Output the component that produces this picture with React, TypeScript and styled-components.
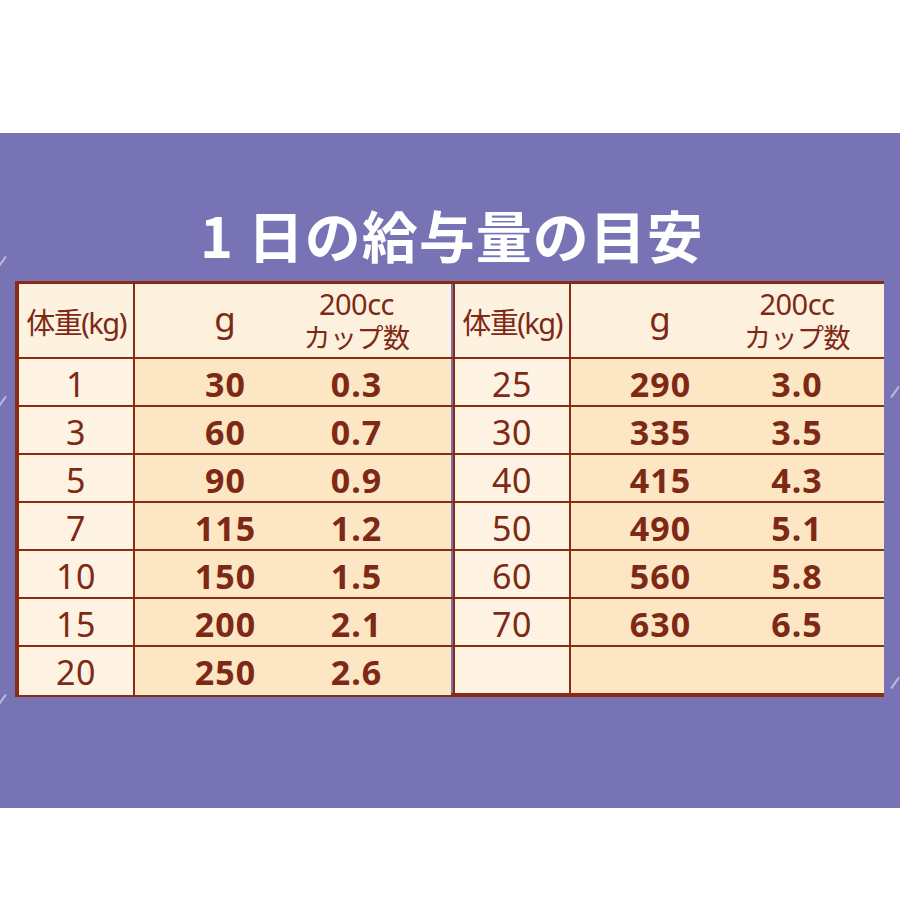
import React from "react";
import styled, { createGlobalStyle } from "styled-components";

const Global = createGlobalStyle`
  html, body { margin: 0; padding: 0; background: #ffffff; }
  body { font-family: "Noto Sans", "Noto Sans CJK JP", sans-serif; }
`;

const INK = "#7d2915";
const LINE = "#8a2c13";

const Page = styled.div`
  width: 900px;
  height: 900px;
  background: #ffffff;
  padding-top: 133px;
  box-sizing: border-box;
`;

const Panel = styled.section`
  position: relative;
  height: 675px;
  background: #7773b5;
  padding-top: 73px;
  box-sizing: border-box;
  overflow: hidden;
`;

const Title = styled.h1`
  margin: 0 0 19px;
  height: 56px;
  line-height: 56px;
  text-align: center;
  color: #ffffff;
  font-family: "Noto Sans CJK JP", sans-serif;
  font-weight: 700;
  font-size: 56px;
  letter-spacing: 1px;
  padding-left: 4px;
`;

const Table = styled.div`
  margin-left: 15px;
  width: 869px;
  box-sizing: border-box;
  border-style: solid;
  border-color: ${LINE};
  border-width: 3px 2px 4px 4px;
  display: flex;
  color: ${INK};
`;

const Half = styled.div<{ $w: number; $divider?: boolean }>`
  width: ${(p) => p.$w}px;
  flex: none;
  display: flex;
  flex-direction: column;
  border-right: ${(p) => (p.$divider ? `2px solid ${LINE}` : "none")};
`;

const Row = styled.div<{ $head?: boolean; $gw: number; $cw: number }>`
  display: grid;
  grid-template-columns: 116px ${(p) => p.$gw}px ${(p) => p.$cw}px;
  height: ${(p) => (p.$head ? 73 : 46)}px;
  border-top: ${(p) => (p.$head ? "none" : `2px solid ${LINE}`)};
`;

const WeightCell = styled.div<{ $head?: boolean }>`
  display: flex;
  align-items: center;
  justify-content: center;
  border-right: 2px solid ${LINE};
  background: ${(p) => (p.$head ? "#fdf2e0" : "#fef3e3")};
  font-size: ${(p) => (p.$head ? 29 : 34)}px;
  font-weight: 400;
  padding-top: ${(p) => (p.$head ? 0 : 2)}px;
  letter-spacing: ${(p) => (p.$head ? "-1.5px" : "0.5px")};
`;

const ValueCell = styled.div<{ $head?: boolean; $pl?: number; $pr?: number }>`
  display: flex;
  flex-direction: column;
  align-items: center;
  justify-content: center;
  padding-left: ${(p) => p.$pl ?? 0}px;
  padding-right: ${(p) => p.$pr ?? 0}px;
  background: ${(p) => (p.$head ? "#fdf1de" : "#fce6c4")};
  font-size: 34px;
  font-weight: 700;
  padding-top: ${(p) => (p.$head ? 0 : 2)}px;
  letter-spacing: 1px;
`;

const GHead = styled.span`
  font-size: 35px;
  font-weight: 400;
  line-height: 1;
  margin-top: -4px;
`;

const CupTop = styled.span`
  font-size: 29px;
  font-weight: 400;
  line-height: 40px;
  letter-spacing: -0.5px;
  margin-top: -2px;
`;

const CupBottom = styled.span`
  font-family: "Liberation Sans", "Noto Sans CJK JP", sans-serif;
  font-size: 27px;
  font-weight: 400;
  line-height: 31px;
  letter-spacing: -0.5px;
`;

const Spark = styled.span<{ $x: number; $y: number; $r: number }>`
  position: absolute;
  left: ${(p) => p.$x}px;
  top: ${(p) => p.$y}px;
  width: 2px;
  height: 14px;
  background: rgba(255, 255, 255, 0.5);
  transform: rotate(${(p) => p.$r}deg);
  border-radius: 1px;
`;

type R = [string, string, string];

const left: R[] = [
  ["1", "30", "0.3"],
  ["3", "60", "0.7"],
  ["5", "90", "0.9"],
  ["7", "115", "1.2"],
  ["10", "150", "1.5"],
  ["15", "200", "2.1"],
  ["20", "250", "2.6"],
];

const right: R[] = [
  ["25", "290", "3.0"],
  ["30", "335", "3.5"],
  ["40", "415", "4.3"],
  ["50", "490", "5.1"],
  ["60", "560", "5.8"],
  ["70", "630", "6.5"],
  ["", "", ""],
];

type HalfProps = {
  rows: R[];
  w: number;
  gw: number;
  cw: number;
  gpl: number;
  cpr: number;
  divider?: boolean;
};

function FeedHalf({ rows, w, gw, cw, gpl, cpr, divider }: HalfProps) {
  return (
    <Half $w={w} $divider={divider}>
      <Row $head $gw={gw} $cw={cw}>
        <WeightCell $head>体重(kg)</WeightCell>
        <ValueCell $head $pl={gpl}>
          <GHead>g</GHead>
        </ValueCell>
        <ValueCell $head $pr={cpr}>
          <CupTop>200cc</CupTop>
          <CupBottom>カップ数</CupBottom>
        </ValueCell>
      </Row>
      {rows.map((r, i) => (
        <Row key={i} $gw={gw} $cw={cw}>
          <WeightCell>{r[0]}</WeightCell>
          <ValueCell $pl={gpl}>{r[1]}</ValueCell>
          <ValueCell $pr={cpr}>{r[2]}</ValueCell>
        </Row>
      ))}
    </Half>
  );
}

export default function App() {
  return (
    <>
      <Global />
      <Page>
        <Panel>
          <Spark $x={1} $y={122} $r={35} />
          <Spark $x={1} $y={262} $r={35} />
          <Spark $x={1} $y={560} $r={35} />
          <Spark $x={894} $y={252} $r={35} />
          <Spark $x={894} $y={543} $r={35} />
          <Title>1 日の給与量の目安</Title>
          <Table>
            <FeedHalf rows={left} w={434} gw={157} cw={159} gpl={24} cpr={30} divider />
            <FeedHalf rows={right} w={429} gw={155} cw={158} gpl={24} cpr={16} />
          </Table>
        </Panel>
      </Page>
    </>
  );
}
